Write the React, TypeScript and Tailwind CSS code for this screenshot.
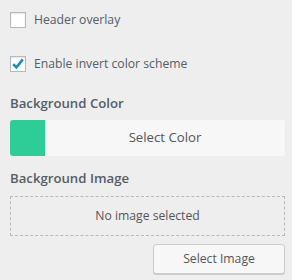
export default function App() {
  return (
    <div
      className="w-[292px] h-[280px] bg-[#eeeeee] pl-[10px] pr-[7px] pt-[12px] text-[#555d66]"
      style={{ fontFamily: '"Open Sans", "Noto Sans", sans-serif' }}
    >
      <label className="flex items-center h-[16px] gap-[8px] text-[12.2px]">
        <span className="w-[16px] h-[16px] bg-white border border-[#b4b9be] shadow-[inset_0_1px_2px_rgba(0,0,0,0.1)]" />
        <span>Header overlay</span>
      </label>

      <label className="flex items-center h-[16px] gap-[8px] text-[12.2px] mt-[28px]">
        <span className="w-[16px] h-[16px] bg-white border border-[#b4b9be] shadow-[inset_0_1px_2px_rgba(0,0,0,0.1)] flex items-center justify-center">
          <svg width="14" height="14" viewBox="0 0 14 14">
            <path d="M2.2 7.2 L5.4 10.4 L11.8 2.4" fill="none" stroke="#1e8cbe" strokeWidth="2.6" />
          </svg>
        </span>
        <span>Enable invert color scheme</span>
      </label>

      <div className="mt-[21px] text-[13.2px] font-semibold leading-[20px]">Background Color</div>
      <button className="mt-[7px] flex w-full h-[36px] rounded-[3px] overflow-hidden bg-[#f7f7f7]">
        <span className="w-[35px] h-full bg-[#2ecc96]" />
        <span className="flex-1 flex items-center justify-center text-[13.2px] text-[#555]">Select Color</span>
      </button>

      <div className="mt-[12px] text-[13.2px] font-semibold leading-[20px]">Background Image</div>
      <div className="mt-[8px] h-[40px] border border-dashed border-[#b4b9be] flex items-center justify-center text-[12.2px] text-[#555]">
        No image selected
      </div>
      <div className="flex justify-end mt-[8px]">
        <button className="w-[132px] h-[30px] rounded-[3px] bg-[#f7f7f7] border border-[#cccccc] shadow-[0_1px_0_#cccccc] text-[12.2px] text-[#555]">
          Select Image
        </button>
      </div>
    </div>
  );
}
